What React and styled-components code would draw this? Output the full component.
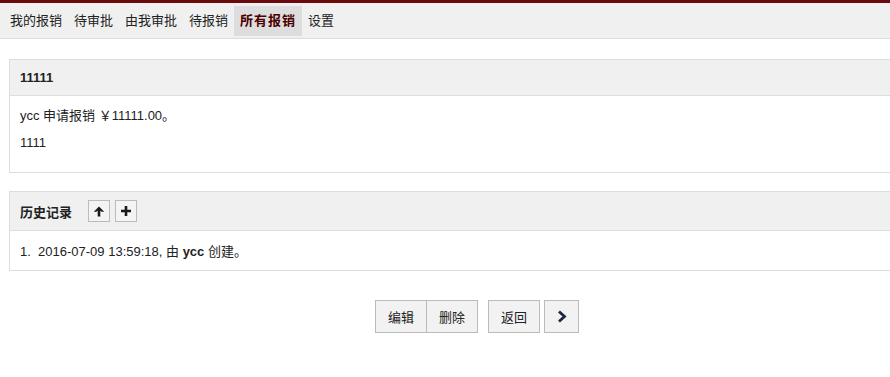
import React from 'react'
import styled, { createGlobalStyle } from 'styled-components'

const Global = createGlobalStyle`
  html, body {
    margin: 0;
    padding: 0;
    background: #fff;
    overflow: hidden;
  }
  body {
    font-family: "Liberation Sans", Arial, "Noto Sans CJK SC", sans-serif;
    font-size: 13px;
    color: #222;
  }
`

const TopBar = styled.div`
  border-top: 3px solid #6b0a0a;
  background: #f0f0f0;
  border-bottom: 1px solid #ddd;
  height: 35px;
  display: flex;
  align-items: center;
  padding-left: 4px;
`

const NavItem = styled.a`
  display: block;
  padding: 0 6px;
  line-height: 30px;
  color: ${p => (p.active ? '#4a0000' : '#222')};
  font-weight: ${p => (p.active ? 'bold' : 'normal')};
  letter-spacing: ${p => (p.active ? '1px' : '0')};
  background: ${p => (p.active ? '#ddd' : 'transparent')};
  text-decoration: none;
`

const Content = styled.div`
  padding: 20px 0 0 9px;
`

/* panels run off the right side of the window in the original */
const Panel = styled.div`
  border: 1px solid #ddd;
  border-right: none;
  margin-bottom: 18px;
`

const PanelHead = styled.div`
  background: #f0f0f0;
  border-bottom: 1px solid #ddd;
  height: ${p => p.h}px;
  display: flex;
  align-items: center;
  padding-left: 10px;
  font-weight: bold;
  gap: 5px;
`

const HeadTitle = styled.span`
  margin-right: 11px;
`

const PanelBody = styled.div`
  padding: 6px 10px 16px;
  p {
    margin: 0;
    line-height: 27px;
  }
`

const IconBtn = styled.span`
  width: 22px;
  height: 22px;
  border: 1px solid #bbb;
  background: #f4f4f4;
  display: flex;
  align-items: center;
  justify-content: center;
  box-sizing: border-box;
`

const HistoryList = styled.div`
  padding: 10px;
  font-weight: normal;
`

const Actions = styled.div`
  display: flex;
  justify-content: center;
  gap: 10px;
  margin-top: 29px;
  padding-left: 55px;
`

const Group = styled.div`
  display: flex;
`

const Button = styled.button`
  font-family: inherit;
  font-size: 13px;
  color: #222;
  height: 33px;
  padding: 0;
  width: ${p => (p.icon ? 35 : 52)}px;
  border: 1px solid #bbb;
  background: #f2f2f2;
  display: flex;
  align-items: center;
  justify-content: center;
  & + & {
    border-left: none;
    width: 51px;
  }
`

const Right = styled.span`
  margin-left: -6px;
`

export default function App() {
  return (
    <>
      <Global />
      <TopBar>
        <NavItem>我的报销</NavItem>
        <NavItem>待审批</NavItem>
        <NavItem>由我审批</NavItem>
        <NavItem>待报销</NavItem>
        <NavItem active>所有报销</NavItem>
        <NavItem>设置</NavItem>
      </TopBar>
      <Content>
        <Panel>
          <PanelHead h={35}>11111</PanelHead>
          <PanelBody>
            <p>ycc 申请报销 ￥11111.00。</p>
            <p>1111</p>
          </PanelBody>
        </Panel>
        <Panel>
          <PanelHead h={38}>
            <HeadTitle>历史记录</HeadTitle>
            <IconBtn>
              <svg width="12" height="11" viewBox="0 0 12 11">
                <path d="M6 0.5 L11.2 5.7 L8.6 5.7 L7.3 4.4 L7.3 10.5 L4.7 10.5 L4.7 4.4 L3.4 5.7 L0.8 5.7 Z" fill="#1a1a1a" />
              </svg>
            </IconBtn>
            <IconBtn>
              <svg width="10" height="10" viewBox="0 0 10 10">
                <path d="M3.7 0 H6.3 V3.7 H10 V6.3 H6.3 V10 H3.7 V6.3 H0 V3.7 H3.7 Z" fill="#1a1a1a" />
              </svg>
            </IconBtn>
          </PanelHead>
          <HistoryList>
            1.&nbsp;&nbsp;2016-07-09 13:59:18, 由 <b>ycc</b> 创建。
          </HistoryList>
        </Panel>
        <Actions>
          <Group>
            <Button>编辑</Button>
            <Button>删除</Button>
          </Group>
          <Group>
            <Button>返回</Button>
          </Group>
          <Right>
            <Button icon>
              <svg width="10" height="13" viewBox="0 0 10 13">
                <path d="M2 1.5 L7.5 6.5 L2 11.5" fill="none" stroke="#1d2340" strokeWidth="2.8" />
              </svg>
            </Button>
          </Right>
        </Actions>
      </Content>
    </>
  )
}
